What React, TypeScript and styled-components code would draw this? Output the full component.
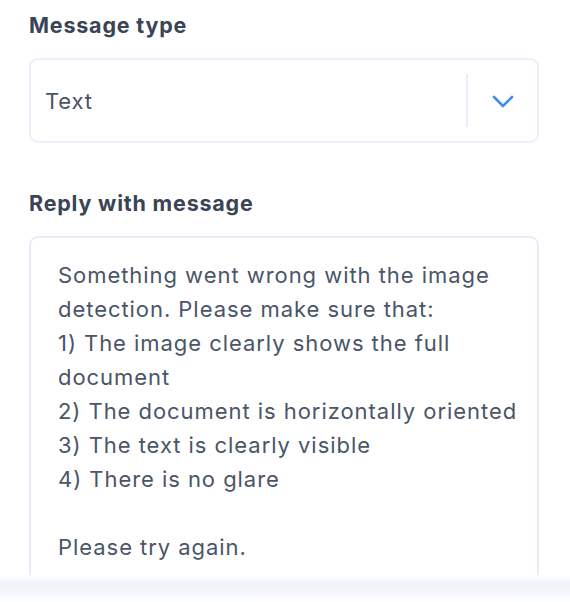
import React from 'react';
import styled, { createGlobalStyle } from 'styled-components';

const GlobalStyle = createGlobalStyle`
  html, body {
    margin: 0;
    padding: 0;
    background: #ffffff;
  }
  body {
    font-family: Inter, "Noto Sans", "Liberation Sans", sans-serif;
    -webkit-font-smoothing: antialiased;
  }
`;

const Page = styled.div`
  height: 602px;
  display: flex;
  flex-direction: column;
  overflow: hidden;
`;

const ScrollArea = styled.div`
  flex: 0 0 575px;
  overflow: hidden;
  padding: 11px 31px 0 29px;
  box-sizing: border-box;
`;

const Footer = styled.div`
  flex: 1;
  background: linear-gradient(to bottom, #ffffff 0%, #eef2f9 35%, #f6f8fc 75%, #ffffff 100%);
`;

const Field = styled.div<{ gap?: number }>`
  display: flex;
  flex-direction: column;
  margin-bottom: ${p => p.gap ?? 0}px;
`;

const Label = styled.div`
  font-size: 21.5px;
  line-height: 28px;
  font-weight: 700;
  color: #3a4454;
  letter-spacing: 0.8px;
  margin-bottom: 19px;
`;

const SelectBox = styled.div`
  height: 85px;
  border: 2px solid #ebeff9;
  border-radius: 9px;
  box-sizing: border-box;
  display: flex;
  align-items: center;
`;

const SelectValue = styled.div`
  flex: 1;
  padding-left: 14px;
  font-size: 22px;
  letter-spacing: 0.8px;
  color: #4a5465;
`;

const Divider = styled.div`
  width: 2px;
  height: 53px;
  background: #e9eef8;
`;

const Chevron = styled.div`
  width: 69px;
  display: flex;
  align-items: center;
  justify-content: center;
  padding-top: 2px;
`;

const TextBox = styled.div`
  height: 360px;
  border: 2px solid #e6edfa;
  border-radius: 9px;
  box-sizing: border-box;
  padding: 20px 27px 0 27px;
`;

const Line = styled.div`
  font-size: 22px;
  line-height: 34px;
  height: 34px;
  letter-spacing: 0.95px;
  color: #4a5568;
  white-space: pre;
`;

const lines = [
  'Something went wrong with the image',
  'detection. Please make sure that:',
  '1) The image clearly shows the full',
  'document',
  '2) The document is horizontally oriented',
  '3) The text is clearly visible',
  '4) There is no glare',
  '',
  'Please try again.',
];

export default function App() {
  return (
    <>
      <GlobalStyle />
      <Page>
        <ScrollArea>
          <Field gap={46}>
            <Label>Message type</Label>
            <SelectBox>
              <SelectValue>Text</SelectValue>
              <Divider />
              <Chevron>
                <svg width="22" height="13" viewBox="0 0 22 13" fill="none">
                  <path d="M2 2l9 9 9-9" stroke="#3f8fe6" strokeWidth="2.6" strokeLinecap="round" strokeLinejoin="round" />
                </svg>
              </Chevron>
            </SelectBox>
          </Field>
          <Field>
            <Label>Reply with message</Label>
            <TextBox>
              {lines.map((l, i) => (
                <Line key={i}>{l}</Line>
              ))}
            </TextBox>
          </Field>
        </ScrollArea>
        <Footer />
      </Page>
    </>
  );
}
